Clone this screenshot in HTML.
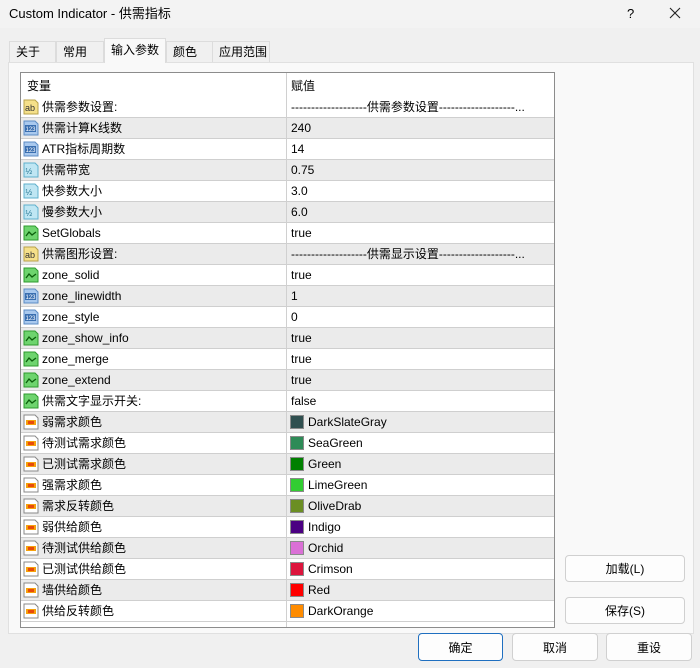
<!DOCTYPE html>
<html><head><meta charset="utf-8"><style>
*{margin:0;padding:0;box-sizing:border-box}
body{width:700px;height:668px;background:#f0f0f0;font-family:"Liberation Sans","Noto Sans CJK SC",sans-serif;font-size:12px;line-height:15px;color:#000;position:relative;overflow:hidden}
span,div{line-height:15px}
.title{position:absolute;left:0;top:0;width:700px;height:28px;background:#f3f3f3}
.title span{position:absolute;left:9px;top:6px;font-size:13px}
.tabs div{position:absolute;top:41px;height:21px;border:1px solid #dcdcdc;border-bottom:none;background:#f0f0f0;padding:3px 0 0 6px;font-size:12px}
.tabs div.sel{top:38px;height:25px;background:#f9f9f9;z-index:2;padding-top:4px}
.panel{position:absolute;left:8px;top:62px;width:686px;height:572px;background:#f9f9f9;border:1px solid #e0e0e0}
.tbl{position:absolute;left:20px;top:72px;width:535px;height:556px;background:#fff;border:1px solid #8c8c8c;overflow:hidden}
.hdr{position:absolute;left:0;top:0;width:533px;height:24px}
.hdr span{position:absolute;top:6px}
.vd{position:absolute;left:265px;top:0;width:1px;height:556px;background:#d0d0d0}
.row{position:absolute;left:0;width:533px;height:21px;border-bottom:1px solid #cfcfcf}
.row.g{background:#ebebeb}
.row svg{position:absolute;left:2px;top:2px}
.row .n{position:absolute;left:21px;top:3px}
.row .v{position:absolute;left:270px;top:3px}
.row .sw{position:absolute;left:269px;top:3px;width:14px;height:14px;border:1px solid #8a8a8a}
.row .v2{position:absolute;left:287px;top:3px}
.btn{position:absolute;background:#fdfdfd;border:1px solid #d0d0d0;border-radius:4px;text-align:center;font-size:12px;padding-top:6px}
</style></head><body>
<svg width="0" height="0" style="position:absolute">
<defs>
<symbol id="ab" viewBox="0 0 16 16"><path d="M1 1h11l3 3v11H1z" fill="#f5e08a" stroke="#b8a24a"/><text x="2" y="12" font-size="9" font-family="Liberation Sans" fill="#333">ab</text></symbol>
<symbol id="n" viewBox="0 0 16 16"><path d="M1 1h11l3 3v11H1z" fill="#a9c9ee" stroke="#5c8cc4"/><rect x="2" y="5" width="11" height="7" fill="#3a6fb0"/><text x="2.5" y="11" font-size="6" font-family="Liberation Sans" fill="#fff">123</text></symbol>
<symbol id="h" viewBox="0 0 16 16"><path d="M1 1h11l3 3v11H1z" fill="#bfe6f3" stroke="#5fb0cc"/><text x="2.5" y="12" font-size="8" font-family="Liberation Sans" fill="#1c6f8c">½</text></symbol>
<symbol id="b" viewBox="0 0 16 16"><path d="M1 1h11l3 3v11H1z" fill="#6ed46e" stroke="#2e9a2e"/><path d="M3 11l3-4 3 3 4-3" fill="none" stroke="#0b5e0b" stroke-width="1.3"/></symbol>
<symbol id="c" viewBox="0 0 16 16"><path d="M1 1h11l3 3v11H1z" fill="#fff" stroke="#888"/><rect x="3" y="6" width="10" height="5" fill="#f6a20c"/><rect x="5" y="7" width="6" height="3" fill="#e84a0a"/></symbol>
</defs></svg>
<div class="title"><span>Custom Indicator - 供需指标</span><span style="left:627px;top:6px">?</span><svg style="position:absolute;left:669px;top:7px" width="12" height="12"><path d="M1 1L11 11M11 1L1 11" stroke="#222" stroke-width="1.1"/></svg></div>
<div class="panel"></div>
<div class="tabs">
<div style="left:9px;width:47px">关于</div>
<div style="left:56px;width:48px">常用</div>
<div class="sel" style="left:104px;width:62px">输入参数</div>
<div style="left:166px;width:47px">颜色</div>
<div style="left:212px;width:58px">应用范围</div>
</div>
<div class="tbl">
<div class="hdr"><span style="left:6px">变量</span><span style="left:270px">赋值</span></div>
<div class="row" style="top:24px"><svg width="16" height="16"><use href="#ab"/></svg><span class="n">供需参数设置:</span><span class="v">-------------------供需参数设置-------------------...</span></div>
<div class="row g" style="top:45px"><svg width="16" height="16"><use href="#n"/></svg><span class="n">供需计算K线数</span><span class="v">240</span></div>
<div class="row" style="top:66px"><svg width="16" height="16"><use href="#n"/></svg><span class="n">ATR指标周期数</span><span class="v">14</span></div>
<div class="row g" style="top:87px"><svg width="16" height="16"><use href="#h"/></svg><span class="n">供需带宽</span><span class="v">0.75</span></div>
<div class="row" style="top:108px"><svg width="16" height="16"><use href="#h"/></svg><span class="n">快参数大小</span><span class="v">3.0</span></div>
<div class="row g" style="top:129px"><svg width="16" height="16"><use href="#h"/></svg><span class="n">慢参数大小</span><span class="v">6.0</span></div>
<div class="row" style="top:150px"><svg width="16" height="16"><use href="#b"/></svg><span class="n">SetGlobals</span><span class="v">true</span></div>
<div class="row g" style="top:171px"><svg width="16" height="16"><use href="#ab"/></svg><span class="n">供需图形设置:</span><span class="v">-------------------供需显示设置-------------------...</span></div>
<div class="row" style="top:192px"><svg width="16" height="16"><use href="#b"/></svg><span class="n">zone_solid</span><span class="v">true</span></div>
<div class="row g" style="top:213px"><svg width="16" height="16"><use href="#n"/></svg><span class="n">zone_linewidth</span><span class="v">1</span></div>
<div class="row" style="top:234px"><svg width="16" height="16"><use href="#n"/></svg><span class="n">zone_style</span><span class="v">0</span></div>
<div class="row g" style="top:255px"><svg width="16" height="16"><use href="#b"/></svg><span class="n">zone_show_info</span><span class="v">true</span></div>
<div class="row" style="top:276px"><svg width="16" height="16"><use href="#b"/></svg><span class="n">zone_merge</span><span class="v">true</span></div>
<div class="row g" style="top:297px"><svg width="16" height="16"><use href="#b"/></svg><span class="n">zone_extend</span><span class="v">true</span></div>
<div class="row" style="top:318px"><svg width="16" height="16"><use href="#b"/></svg><span class="n">供需文字显示开关:</span><span class="v">false</span></div>
<div class="row g" style="top:339px"><svg width="16" height="16"><use href="#c"/></svg><span class="n">弱需求颜色</span><span class="sw" style="background:#2f4f4f"></span><span class="v2">DarkSlateGray</span></div>
<div class="row" style="top:360px"><svg width="16" height="16"><use href="#c"/></svg><span class="n">待测试需求颜色</span><span class="sw" style="background:#2e8b57"></span><span class="v2">SeaGreen</span></div>
<div class="row g" style="top:381px"><svg width="16" height="16"><use href="#c"/></svg><span class="n">已测试需求颜色</span><span class="sw" style="background:#008000"></span><span class="v2">Green</span></div>
<div class="row" style="top:402px"><svg width="16" height="16"><use href="#c"/></svg><span class="n">强需求颜色</span><span class="sw" style="background:#32cd32"></span><span class="v2">LimeGreen</span></div>
<div class="row g" style="top:423px"><svg width="16" height="16"><use href="#c"/></svg><span class="n">需求反转颜色</span><span class="sw" style="background:#6b8e23"></span><span class="v2">OliveDrab</span></div>
<div class="row" style="top:444px"><svg width="16" height="16"><use href="#c"/></svg><span class="n">弱供给颜色</span><span class="sw" style="background:#4b0082"></span><span class="v2">Indigo</span></div>
<div class="row g" style="top:465px"><svg width="16" height="16"><use href="#c"/></svg><span class="n">待测试供给颜色</span><span class="sw" style="background:#da70d6"></span><span class="v2">Orchid</span></div>
<div class="row" style="top:486px"><svg width="16" height="16"><use href="#c"/></svg><span class="n">已测试供给颜色</span><span class="sw" style="background:#dc143c"></span><span class="v2">Crimson</span></div>
<div class="row g" style="top:507px"><svg width="16" height="16"><use href="#c"/></svg><span class="n">墙供给颜色</span><span class="sw" style="background:#ff0000"></span><span class="v2">Red</span></div>
<div class="row" style="top:528px"><svg width="16" height="16"><use href="#c"/></svg><span class="n">供给反转颜色</span><span class="sw" style="background:#ff8c00"></span><span class="v2">DarkOrange</span></div>
<div class="vd"></div>
</div>
<div class="btn" style="left:565px;top:555px;width:120px;height:27px">加载(L)</div>
<div class="btn" style="left:565px;top:597px;width:120px;height:27px">保存(S)</div>
<div class="btn" style="left:418px;top:633px;width:85px;height:28px;padding-top:7px;border-color:#1f6fc0">确定</div>
<div class="btn" style="left:512px;top:633px;width:86px;height:28px;padding-top:7px">取消</div>
<div class="btn" style="left:606px;top:633px;width:86px;height:28px;padding-top:7px">重设</div>
</body></html>
